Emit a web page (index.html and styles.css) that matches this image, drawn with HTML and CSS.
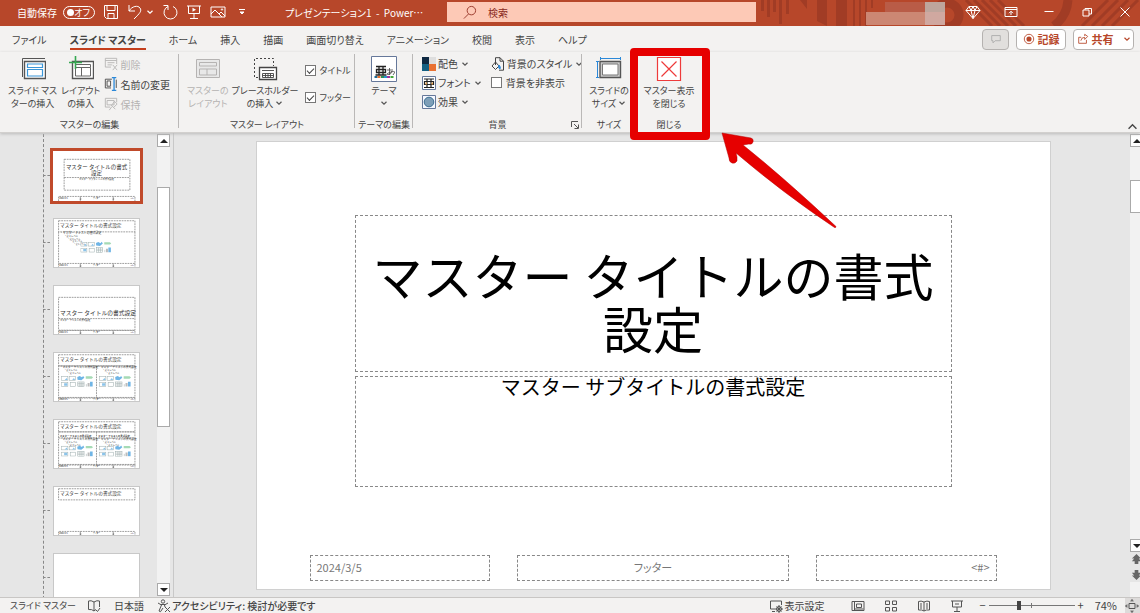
FILE: index.html
```html
<!DOCTYPE html>
<html lang="ja">
<head>
<meta charset="utf-8">
<title>プレゼンテーション1 - PowerPoint</title>
<link rel="stylesheet" href="styles.css">
</head>
<body>
<svg class="defs" aria-hidden="true">
  <symbol id="chev" viewBox="0 0 8 8"><path d="M1.5 2.8 4 5.2 6.500 2.800" fill="none" stroke="currentColor" stroke-width="1.200"/></symbol>
  <symbol id="foot" viewBox="0 0 860 60"><path d="M55 58V12H810V58M270 12V58M595 12V58" class="dash"/><text x="62" y="34" font-size="20">2024/3/5</text><text x="430" y="34" font-size="20" text-anchor="middle">フッター</text><text x="800" y="34" font-size="20" text-anchor="end">&lt;#&gt;</text><path d="M265 38h14M590 38h14" stroke="#777" stroke-width="14"/></symbol>
  <symbol id="media" viewBox="0 0 320 120">
    <g fill="none" stroke="#9aa" stroke-width="5"><rect x="5" y="15" width="62" height="36"/><rect x="80" y="15" width="62" height="36"/><rect x="5" y="74" width="62" height="38"/><rect x="90" y="74" width="52" height="38"/><rect x="165" y="68" width="62" height="46"/><path d="M165 83h62M165 98h62M186 68v46M206 68v46M250 90v24"/></g>
    <path d="M36 48l18-20 12 20zM110 48l16-20 14 20zM30 80h32v25H30z" fill="#8cc4ea"/>
    <path d="M160 20l24-10 22 12 12-14 12 18-30 24-38-4z" fill="#6fb5e6"/>
    <path d="M244 12h58l14 12-14 12h-58z" fill="#a5dab5"/><path d="M262 78h20v36h-20z" fill="#bbb"/><path d="M286 66h26v48h-26z" fill="#6fb5e6"/>
  </symbol>
</svg>

<header class="titlebar">
  <svg class="pattern" viewBox="0 0 388 26" aria-hidden="true">
    <g fill="#a13c25"><path d="M9 0h3v11H9zM15 0h3v17h-3zM21 0h3v12h-3zM27 0h3v24h-3zM34 0h3v14h-3zM48 0h7v9zM65 0h10v26l-10-5zM84 0h11v26H84zM101 0h2v26h-2zM107 0h2v26h-2zM113 0h2v26h-2zM119 0h2v8h-2z"/></g>
    <circle cx="195" cy="15" r="12" fill="none" stroke="#a13c25" stroke-width="9"/>
    <g fill="none" stroke="#a13c25"><path d="M214 0l26 26M222 0l26 26M230 0l26 26M238 0l26 26M246 0l26 26" stroke-width="3"/><path d="M316 0q-1 16-14 26" stroke-width="9"/><path d="M330 26 356 0M340 26 366 0M350 26 376 0M360 26 386 0" stroke-width="3"/></g>
    <path d="M114 12h59v13h-59z" fill="#cc8773"/><path d="M133 2h40v10h-40z" fill="#b95c47"/><path d="M173 2h20v10h-20z" fill="#bea59c"/><path d="M173 12h20v13h-20z" fill="#d0a8a0"/>
  </svg>
  <div class="quick">
    <label class="autosave" for="auto">自動保存</label>
    <button class="switch" id="auto" type="button" role="switch" aria-checked="false"><i></i>オフ</button>
    <button class="ico save" type="button" aria-label="保存"><svg viewBox="0 0 16 16"><path d="M1.500 1.500h13v13h-11l-2-2zM4 1.500v5h8v-5M5 14.500v-5h6v5"/></svg></button>
    <button class="ico" type="button" aria-label="元に戻す"><svg viewBox="0 0 16 16"><path d="M2 1v6h6M2 7C5 2 11 1 13 4s0 5-6 11"/></svg></button>
    <button class="ico tiny" type="button" aria-label="元に戻す履歴"><svg viewBox="0 0 8 8"><use href="#chev"/></svg></button>
    <button class="ico" type="button" aria-label="繰り返し"><svg viewBox="0 0 16 16"><path d="M1.500 1.500H6V6M6 2.500A6.500 6.500 0 1 0 11 2.500"/></svg></button>
    <button class="ico" type="button" aria-label="スライドショー"><svg viewBox="0 0 16 16"><path d="M1 2h14M2.500 2v7.500h11V2M8 9.500V14M4 14.500h8"/><path d="M6.500 3.800v4L10 5.800z" fill="#fff" stroke="none"/></svg></button>
    <button class="ico" type="button" aria-label="画像"><svg viewBox="0 0 16 16"><path d="M1 3h14v10H1zM1 10l4-4 7 7M9 10l2-2 4 4"/><circle cx="12" cy="5.500" r=".7"/></svg></button>
    <button class="ico tiny" type="button" aria-label="ツールバーのカスタマイズ"><svg viewBox="0 0 8 8"><path d="M1 1.500h6M2 4l2 2 2-2z" fill="#fff"/></svg></button>
  </div>
  <div class="doc">プレゼンテーション1&nbsp; -&nbsp; Power…</div>
  <div class="search">
    <svg viewBox="0 0 16 16" aria-hidden="true"><circle cx="10" cy="6" r="4.500"/><path d="M7 9.500 2 14.500"/></svg>
    <input type="text" aria-label="検索" placeholder="検索">
  </div>
  <div class="window">
    <button class="ico" type="button" aria-label="プレミアム"><svg viewBox="0 0 16 16"><path d="M4 2.500h8l3 4-7 8-7-8zM1 6.500h14M4 2.500l2 4 2 8 2-8 2-4M6 6.500l2-4 2 4"/></svg></button>
    <button class="ico" type="button" aria-label="リボンの表示オプション"><svg viewBox="0 0 16 16"><path d="M2 3.500h12v9H2zM2 5.500h12M8 11V7.500M6 9.200l2-2 2 2"/></svg></button>
    <button class="ico" type="button" aria-label="最小化"><svg viewBox="0 0 16 16"><path d="M3.500 7.500h9"/></svg></button>
    <button class="ico" type="button" aria-label="元に戻す (縮小)"><svg viewBox="0 0 16 16"><path d="M4 6h6v6H4zM6 6V4.500h6.500V10H10"/></svg></button>
    <button class="ico" type="button" aria-label="閉じる"><svg viewBox="0 0 16 16"><path d="M3.500 3.500l9 9M12.500 3.500l-9 9"/></svg></button>
  </div>
</header>

<nav class="tabs">
  <a href="#file">ファイル</a><a href="#master" class="on">スライド マスター</a><a href="#home">ホーム</a><a href="#insert">挿入</a><a href="#draw">描画</a><a href="#trans">画面切り替え</a><a href="#anim">アニメーション</a><a href="#review">校閲</a><a href="#view">表示</a><a href="#help">ヘルプ</a>
  <div class="actions">
    <button class="pill off" type="button" aria-label="コメント"><svg viewBox="0 0 14 14"><path d="M2 3h10v6H6l-2.500 2.500V9H2z"/></svg></button>
    <button class="pill rec" type="button"><svg viewBox="0 0 14 14"><circle cx="7" cy="7" r="5.500"/><circle cx="7" cy="7" r="3" fill="#b7472a" stroke="none"/></svg>記録</button>
    <button class="pill share" type="button"><svg viewBox="0 0 14 14"><path d="M5 5H2v7h9V8M4.500 9Q5 5 9 5V7.500L12.500 4 9 1.500V3.500"/></svg>共有<svg class="c" viewBox="0 0 8 8"><use href="#chev"/></svg></button>
  </div>
</nav>

<section class="ribbon" aria-label="リボン">
  <div class="group g1">
    <div class="row">
      <button class="big" type="button"><svg viewBox="0 0 26 26" fill="none"><path d="M2.500 21V2.500H25" stroke="#555"/><path d="M4.500 5.500h21v17h-21z" fill="#fff" stroke="#555" stroke-width="1.400"/><path d="M7.500 8h15v3.500h-15zM7.500 13.500h15V20h-15z" stroke="#3a96d8" stroke-width="1.200"/></svg>スライド マス<br>ターの挿入</button>
      <button class="big" type="button"><svg viewBox="0 0 26 26" fill="none"><path d="M4.500 5.500h21v17h-21z" fill="#fff" stroke="#555" stroke-width="1.400"/><path d="M7.500 8.500h15v3h-15zM7.500 11.500v8.500h15v-8.500M13.500 11.500V20" stroke="#666"/><path d="M7.500 0v13M1 6.500h13" stroke="#36a852" stroke-width="1.600"/></svg>レイアウト<br>の挿入</button>
      <div class="stack">
        <button type="button" class="dis"><svg viewBox="0 0 16 16"><path d="M8 11.500H1.500v-10h13V8M1.500 4h13M4 6.500h8M4 9h5M10 9l5 6M15 9l-5 6"/></svg>削除</button>
        <button type="button"><svg viewBox="0 0 16 16"><path d="M8 12.500H1.500v-10H9M14 3v9.500M3.500 4.500h4v6h-4z"/><path d="M9 .8h5M11.500 1v14M9 15.200h5" stroke="#2b88d8" stroke-width="1.500"/></svg>名前の変更</button>
        <button type="button" class="dis"><svg viewBox="0 0 16 16"><path d="M7 11.500H1.500v-10h13V6M3.500 4h8v5h-8zM6 15l3-4M8 9l5 5M9 9l3-4 3 3-4 4"/></svg>保持</button>
      </div>
    </div>
    <div class="name">マスターの編集</div>
  </div>
  <div class="group g2">
    <div class="row">
      <button class="big dis" type="button"><svg viewBox="0 0 26 26" fill="none" stroke="currentColor"><path d="M1.500 3.500h23v18h-23z" fill="#e8e8e8"/><path d="M4.500 6.500h17v3.500h-17zM4.500 13h17v6h-17zM12 13v6"/></svg>マスターの<br>レイアウト</button>
      <button class="big" type="button"><svg viewBox="0 0 26 26" fill="none" stroke="#444"><path d="M6 21.500H2.500v-19h19V10" stroke-dasharray="2 2"/><path d="M7.500 11.500h17v12h-17z" fill="#fff" stroke-width="1.300"/><path d="M10 14.500h12M10.500 17.500h11v4h-11zM10.500 19.500h11M13.500 17.500v4M16 17.500v4M18.500 17.500v4" stroke-width=".9"/></svg>プレースホルダー<br>の挿入 <svg class="c" viewBox="0 0 8 8"><use href="#chev"/></svg></button>
      <div class="checks">
        <label><input type="checkbox" checked>タイトル</label>
        <label><input type="checkbox" checked>フッター</label>
      </div>
    </div>
    <div class="name">マスター レイアウト</div>
  </div>
  <div class="group g3">
    <div class="row">
      <button class="big" type="button"><svg viewBox="0 0 26 26"><path d="M.5.500h25v25H.5z" fill="#fff" stroke="#66789a"/><path d="M5 10.500h10M8 10.500v8M12 10.500v8M5.500 13.500h9v3h-9zM4.500 19h11" fill="none" stroke="#222" stroke-width="1.300"/><path d="M16 14h6M18.500 12v7M21 15q-1 4-4 3.500t3-2.500 2 3" fill="none" stroke="#444" stroke-width=".8"/><path d="M3.500 20h3v2h-3z" fill="#1b6a98"/><path d="M6.500 20h3v2h-3z" fill="#e8702e"/><path d="M10 20h3v2h-3z" fill="#29905a"/><path d="M13 20h3v2h-3z" fill="#2694d0"/><path d="M16 20h3v2h-3z" fill="#a0309a"/><path d="M19.500 20h3v2h-3z" fill="#45a83c"/></svg>テーマ<br><svg class="c" viewBox="0 0 8 8"><use href="#chev"/></svg></button>
    </div>
    <div class="name">テーマの編集</div>
  </div>
  <div class="group g4">
    <div class="row">
      <div class="stack">
        <button type="button"><svg viewBox="0 0 14 14"><path d="M0 0h7v7H0z" fill="#0e2841" stroke="none"/><path d="M7 0h7v7H7z" fill="#dedede" stroke="none"/><path d="M0 7h7v7H0z" fill="#156082" stroke="none"/><path d="M7 7h7v7H7z" fill="#e97132" stroke="none"/></svg>配色<svg class="c" viewBox="0 0 8 8"><use href="#chev"/></svg></button>
        <button type="button"><svg viewBox="0 0 14 14"><path d="M.5.500h13v13H.5z" fill="#fff" stroke="#66789a"/><path d="M2 3h10M5 3v8M9 3v8M2.500 5.500h9v3h-9zM2 11.500h10" stroke="#222" stroke-width="1.200"/><path d="M3.500 6.500h1.500v2H3.500zM9.500 6.500H11v2H9.500z" fill="#e8a04a" stroke="none"/></svg>フォント<svg class="c" viewBox="0 0 8 8"><use href="#chev"/></svg></button>
        <button type="button"><svg viewBox="0 0 14 14"><path d="M.5.500h13v13H.5z" fill="#f5f8ff" stroke="#66789a"/><circle cx="7" cy="7" r="4.800" fill="#7e9fb8" stroke="#3d6f92"/></svg>効果<svg class="c" viewBox="0 0 8 8"><use href="#chev"/></svg></button>
      </div>
      <div class="stack">
        <button type="button"><svg viewBox="0 0 14 14"><path d="M4.500 3V.7H9l3.500 3.500v9H8M9 .7v3.500h3.500"/><path d="M4.500 5 1 9l3.500 3.500L8 9zM4.500 3v5"/><path d="M8 8q2 2 1 4-2 0-1-4" stroke="#2b88d8" fill="#2b88d8"/></svg>背景のスタイル<svg class="c" viewBox="0 0 8 8"><use href="#chev"/></svg></button>
        <label><input type="checkbox">背景を非表示</label>
      </div>
    </div>
    <div class="name">背景</div>
    <button class="launch" type="button" aria-label="背景の書式設定"><svg viewBox="0 0 8 8"><path d="M.5 6V.500H7M3 3l4 4M7.500 3.500v4h-4" fill="none" stroke="#555"/></svg></button>
  </div>
  <div class="group g5">
    <div class="row">
      <button class="big" type="button"><svg viewBox="0 0 26 26" fill="none"><path d="M4 2.500h21M4.500 1v3M24.500 1v3M1.500 5v17M0 5.500h3M0 21.500h3" stroke="#2b88d8"/><path d="M4 5.500h20.500v16H4z" fill="#ccc" stroke="#555" stroke-width="1.400"/><path d="M6.500 8h15.500v11H6.500z" fill="#fff" stroke="#777"/></svg>スライドの<br>サイズ <svg class="c" viewBox="0 0 8 8"><use href="#chev"/></svg></button>
    </div>
    <div class="name">サイズ</div>
  </div>
  <div class="group g6">
    <div class="row">
      <button class="big" type="button"><svg viewBox="0 0 26 26" fill="none" stroke="#ee3b3b"><path d="M1.500 1.500h23v23h-23z" fill="#fff" stroke-width="1.200"/><path d="M5.500 5.500l15 15M20.500 5.500l-15 15" stroke-width="1.200"/></svg>マスター表示<br>を閉じる</button>
    </div>
    <div class="name">閉じる</div>
    <div class="frame"></div>
    <svg class="arrow" viewBox="0 0 120 100" aria-hidden="true"><path d="M1 2 30 7q4 1 3 4-1 3-4 2l-8 1Q50 35 116 96q1 2-1 1Q60 58 16 24l1 5v5q-2 3-5 2-3-1-3-5z" fill="none"/><path d="M1 2 30 7q3 1 2 4-1 3-4 2l-6 1Q62 46 115 95.500q0 1.500-1.500 1Q62 62 15 22l1 4v4q-2 3-5 2-3-1-3-5z" fill="#e60000" stroke="#b40000" stroke-width=".5"/></svg>
  </div>
  <button class="collapse" type="button" aria-label="リボンを折りたたむ"><svg viewBox="0 0 8 8"><path d="M.5 6 4 2.500 7.500 6" fill="none" stroke="#444" stroke-width="1.200"/></svg></button>
</section>

<main>
  <aside class="panel">
    <ul class="thumbs">
      <li class="sel"><a href="#l1" aria-label="タイトル スライド"><svg viewBox="0 0 860 490"><path d="M110 80h650v305H110zM110 260h650" class="dash"/><text x="430" y="172" font-size="54" text-anchor="middle">マスター タイトルの書式</text><text x="430" y="234" font-size="54" text-anchor="middle">設定</text><text x="430" y="280" font-size="23" text-anchor="middle">マスター サブタイトルの書式設定</text><use href="#foot" y="435" width="860" height="60"/></svg></a></li>
      <li><a href="#l2" aria-label="タイトルとコンテンツ"><svg viewBox="0 0 860 490"><path d="M55 25h755v110H55zM55 135v320M810 135v320" class="dash"/><text x="70" y="86" font-size="46">マスター タイトルの書式設定</text><text x="68" y="160" font-size="29">・マスター テキストの書式設定</text><text x="110" y="186" font-size="23">・第 2 レベル</text><text x="145" y="212" font-size="21">・第 3 レベル</text><text x="175" y="238" font-size="19">・第 4 レベル</text><text x="205" y="262" font-size="19">・第 5 レベル</text><use href="#media" x="270" y="225" width="310" height="118"/><use href="#foot" y="435" width="860" height="60"/></svg></a></li>
      <li><a href="#l3" aria-label="セクション見出し"><svg viewBox="0 0 860 490"><path d="M55 120h755v325H55zM55 330h755" class="dash"/><text x="70" y="298" font-size="57">マスター タイトルの書式設定</text><text x="68" y="353" font-size="23">マスター テキストの書式設定</text><use href="#foot" y="435" width="860" height="60"/></svg></a></li>
      <li><a href="#l4" aria-label="2 つのコンテンツ"><svg viewBox="0 0 860 490"><path d="M55 25h755v110H55zM55 135h755v318H55zM430 135v318" class="dash"/><text x="70" y="86" font-size="46">マスター タイトルの書式設定</text><text x="66" y="160" font-size="27">・マスター テキストの書式設定</text><text x="446" y="160" font-size="27">・マスター テキストの書式設定</text><g font-size="22"><text x="110" y="190">・第 2 レベル</text><text x="145" y="216">・第 3 レベル</text><text x="490" y="190">・第 2 レベル</text><text x="525" y="216">・第 3 レベル</text></g><use href="#media" x="80" y="226" width="320" height="120"/><use href="#media" x="455" y="226" width="320" height="120"/><use href="#foot" y="435" width="860" height="60"/></svg></a></li>
      <li><a href="#l5" aria-label="比較"><svg viewBox="0 0 860 490"><path d="M55 25h755v100H55zM55 125h755v328H55zM55 185h755M430 125v328" class="dash"/><text x="70" y="86" font-size="46">マスター タイトルの書式設定</text><g font-size="24" font-weight="700"><text x="66" y="172">マスター テキストの書式設定</text><text x="446" y="172">マスター テキストの書式設定</text></g><g font-size="27"><text x="66" y="208">・マスター テキストの書式設定</text><text x="446" y="208">・マスター テキストの書式設定</text></g><g font-size="22"><text x="110" y="236">・第 2 レベル</text><text x="145" y="260">・第 3 レベル</text><text x="490" y="236">・第 2 レベル</text><text x="525" y="260">・第 3 レベル</text></g><use href="#media" x="80" y="252" width="320" height="120"/><use href="#media" x="455" y="252" width="320" height="120"/><use href="#foot" y="435" width="860" height="60"/></svg></a></li>
      <li><a href="#l6" aria-label="タイトルのみ"><svg viewBox="0 0 860 490"><path d="M55 25h755v110H55z" class="dash"/><text x="70" y="86" font-size="46">マスター タイトルの書式設定</text><use href="#foot" y="435" width="860" height="60"/></svg></a></li>
      <li><a href="#l7" aria-label="白紙"><svg viewBox="0 0 860 490"></svg></a></li>
    </ul>
    <div class="scroll left"><button type="button" aria-label="上へ"><i class="up"></i></button><span class="track"><b></b></span><button type="button" aria-label="下へ"><i class="down"></i></button></div>
  </aside>
  <section class="stage">
    <article class="slide">
      <h1>マスター タイトルの書式<br>設定</h1>
      <h2>マスター サブタイトルの書式設定</h2>
      <footer><span>2024/3/5</span><span>フッター</span><span>&lt;#&gt;</span></footer>
    </article>
  </section>
  <div class="scroll right"><button type="button" aria-label="上へ"><i class="up"></i></button><span class="track"><b></b></span><button type="button" aria-label="下へ"><i class="down"></i></button>
    <button class="page" type="button" aria-label="前のスライド"><svg viewBox="0 0 12 12"><path d="M6 0l5 5H8.500L11 8H8v3H4V8H1l2.500-3H1z"/></svg></button>
    <button class="page" type="button" aria-label="次のスライド"><svg viewBox="0 0 12 12"><path d="M6 12 1 7h2.500L1 4h3V1h4v3h3L8.500 7H11z"/></svg></button>
  </div>
</main>

<div class="status">
  <span class="s1">スライド マスター</span>
  <button type="button" class="s2" aria-label="スペルチェック"><svg viewBox="0 0 14 14"><path d="M7 3v9M7 3Q4 1 1.500 2v8.500Q5 10 7 12q1-1 2-1.500M7 3q3-2 5.500-1v6M9 11l1.500 1.500L13 9"/></svg></button>
  <button type="button" class="s3">日本語</button>
  <button type="button" class="s4"><svg viewBox="0 0 14 14"><circle cx="6" cy="2.500" r="1.700"/><path d="M1 4l3.500 2L2 12l1.500.7L6 9M11 4 7.500 6l.5 2M4 5.500h4M8 8l5 5M13 8l-5 5"/></svg>アクセシビリティ: 検討が必要です</button>
  <div class="tools">
    <button type="button" class="disp"><svg viewBox="0 0 14 14"><path d="M6 10H1.500V2h11v4M3 12.500h3"/><circle cx="10" cy="10" r="2.500"/><path d="M10 6v8M6 10h8M7.500 7.500l5 5M12.500 7.500l-5 5"/></svg>表示設定</button>
    <button type="button" aria-label="標準"><svg viewBox="0 0 14 14"><path d="M1 2.500h12v9H1zM3.500 2.500v9M5.500 5h5v3.500h-5zM3.500 10h9"/></svg></button>
    <button type="button" aria-label="スライド一覧"><svg viewBox="0 0 14 14"><path d="M1.500 2h4v3.500h-4zM8.500 2h4v3.500h-4zM1.500 8.500h4V12h-4zM8.500 8.500h4V12h-4z"/></svg></button>
    <button type="button" aria-label="閲覧表示"><svg viewBox="0 0 14 14"><path d="M7 3v9M7 3Q4 1.500 1.500 2.500v8.500Q5 10.500 7 12q2-1.500 5.500-1V2.500Q10 1.500 7 3M3 5h2M3 7h2M3 9h2M9 5h2M9 7h2M9 9h2"/></svg></button>
    <button type="button" aria-label="スライドショー"><svg viewBox="0 0 14 14"><path d="M1 2h12M2.500 2v6h9V2M5 5h4M7 8v4M4 12.500h6"/></svg></button>
    <div class="zoom"><button type="button" aria-label="縮小">−</button><input type="range" min="0" max="100" value="35" aria-label="ズーム"><button type="button" aria-label="拡大">+</button><span>74%</span></div>
    <button type="button" class="fit" aria-label="ウィンドウに合わせる"><svg viewBox="0 0 14 14"><path d="M4 4.500h6v5H4zM7 .7v2M5.500 2 7 .7 8.500 2M7 13.300v-2M5.500 12 7 13.300 8.500 12M.7 7h2M2 5.500.7 7 2 8.500M13.300 7h-2M12 5.500 13.300 7 12 8.500"/></svg></button>
  </div>
</div>
</body>
</html>
```

FILE: styles.css
```css
* { box-sizing: border-box; }
body {
  margin: 0;
  height: 100vh;
  overflow: hidden;
  display: flex;
  flex-direction: column;
  background: #e6e6e6;
  color: #444;
  font: 10px/13px "Noto Sans CJK JP", "Noto Sans", sans-serif;
  font-feature-settings: "palt";
}
button, input { font: inherit; font-feature-settings: inherit; color: inherit; }
button { border: 0; padding: 0; background: none; }
a { color: inherit; text-decoration: none; }
.defs { position: absolute; width: 0; height: 0; }

/* title bar */
.titlebar {
  position: relative;
  flex: none;
  height: 26px;
  display: flex;
  align-items: center;
  background: #b7472a;
  color: #fff;
  padding-bottom: 2px;
}
.pattern { position: absolute; right: 0; top: 0; width: 388px; height: 26px; }
.quick { display: flex; align-items: center; width: 285px; padding-left: 17px; gap: 8px; }
.autosave { white-space: nowrap; }
.switch {
  width: 32px;
  height: 13px;
  flex: none;
  margin-left: -2px;
  border: 1px solid #fff;
  border-radius: 7px;
  display: flex;
  align-items: center;
  justify-content: space-between;
  padding: 0 4px 0 3px;
  font-size: 9px;
  line-height: 11px;
  white-space: nowrap;
}
.switch i { width: 7px; height: 7px; flex: none; border-radius: 50%; background: #fff; }
.ico svg { display: block; width: 16px; height: 16px; fill: none; stroke: #fff; }
.ico.tiny svg { width: 8px; height: 8px; }
.ico.tiny { margin: 0 0 0 -5px; color: #fff; }
.ico.tiny:last-child { margin: 0 0 0 4px; }
.doc { width: 162px; white-space: nowrap; }
.search {
  flex: 0 1 309px;
  height: 20px;
  display: flex;
  align-items: center;
  gap: 11px;
  padding-left: 15px;
  background: #fdc9b6;
}
.search svg { width: 15px; height: 15px; fill: none; stroke: #97372a; flex: none; }
.search input { flex: 1; min-width: 0; border: 0; padding: 0; background: none; }
.search input::placeholder { color: #8a2a1c; opacity: 1; }
.window { position: relative; margin-left: auto; display: flex; gap: 22px; padding-right: 7px; }

/* tabs */
.tabs { flex: none; height: 26px; display: flex; align-items: center; gap: 23px; padding: 0 6px 0 12px; background: #f3f2f1; white-space: nowrap; }
.tabs a { height: 22px; line-height: 24px; border-bottom: 2px solid transparent; }
.tabs .on { font-weight: 700; border-color: #c43e1c; }
.actions { margin-left: auto; display: flex; gap: 7px; }
.pill {
  height: 21px;
  display: flex;
  align-items: center;
  justify-content: center;
  gap: 3px;
  border: 1px solid #b5b2b0;
  border-radius: 4px;
  background: #fff;
  color: #b7472a;
  font-weight: 700;
  font-size: 11px;
}
.pill svg { width: 12px; height: 12px; fill: none; stroke: currentColor; }
.pill .c { width: 8px; height: 8px; margin-left: 6px; color: #b7472a; stroke: none; }
.off { width: 27px; background: #e1dfdd; color: #aaa; }
.rec { width: 50px; }
.share { width: 61px; }

/* ribbon */
.ribbon { position: relative; flex: none; height: 81px; display: flex; background: #f3f2f1; z-index: 2; border-bottom: 1px solid #d2d0ce; box-shadow: 0 1px 3px #bbb; }
.group { position: relative; display: flex; flex-direction: column; justify-content: space-between; padding-top: 4px; }
.group::after { content: ""; position: absolute; right: 0; top: 2px; bottom: 4px; width: 1px; background: #bab8b7; }
.g5::after, .g6::after { display: none; }
.row { display: flex; }
.name { text-align: center; height: 14px; white-space: nowrap; font-size: 9px; }
.g1 { width: 179px; } .g2 { width: 176px; } .g3 { width: 58px; } .g4 { width: 169px; } .g5 { width: 54px; } .g6 { width: 66px; }
.big { font-size: 9px; line-height: 13px; white-space: nowrap; text-align: center; flex: none; align-self: flex-start; }
.big > svg:first-child { display: block; width: 26px; height: 26px; margin: 0 auto 2px; }
.c { width: 8px; height: 8px; color: #555; }
.dis { color: #b5b3b2; }
.stack { display: flex; flex-direction: column; margin-top: -2px; }
.stack button, .stack label { height: 19px; display: flex; align-items: center; gap: 2px; white-space: nowrap; }
.stack svg { width: 14px; height: 14px; fill: none; stroke: currentColor; }
.stack svg.c { width: 8px; height: 8px; margin-left: 1px; }
.g1 .row { padding-left: 8px; gap: 4px; }
.g1 .stack button { height: 20px; }
.g2 .row { padding-left: 8px; gap: 3px; }
.g3 .row, .g5 .row, .g6 .row { justify-content: center; }
.g4 .row { padding-left: 9px; gap: 9px; }
.g4 .stack label { gap: 4px; }
.checks { display: flex; flex-direction: column; gap: 14px; padding: 8px 0 0 3px; }
.checks label { display: flex; align-items: center; gap: 4px; font-size: 9px; white-space: nowrap; }
input[type=checkbox] { appearance: none; margin: 0; width: 11px; height: 11px; border: 1px solid #777; background: #fff; display: grid; place-items: center; }
input[type=checkbox]:checked::before { content: ""; width: 6px; height: 3px; border: solid #444; border-width: 0 0 1px 1px; rotate: -45deg; margin-top: -2px; }
.launch { position: absolute; right: 3px; bottom: 3px; width: 8px; height: 8px; display: flex; }
.collapse { position: absolute; right: 3px; bottom: 1px; width: 9px; height: 9px; display: flex; }
.frame { position: absolute; left: -6px; top: -4px; width: 80px; height: 92px; border: 8px solid #e60000; border-radius: 4px; }
.arrow { position: absolute; left: 85px; top: 79px; width: 120px; height: 100px; }

/* workspace */
main { flex: 1; min-height: 0; display: flex; }
.panel { position: relative; width: 174px; display: flex; justify-content: flex-end; border-right: 1px solid #c8c8c8; padding: 1px 3px 1px 0; overflow: hidden; }
.thumbs { list-style: none; margin: 0; padding: 17px 0 0; flex: 1; height: 480px; position: relative; display: flex; flex-direction: column; gap: 17px; padding-left: 53px; }
.thumbs::before { content: ""; position: absolute; left: 43px; top: 0; bottom: 0; border-left: 1px dashed #888; }
.thumbs li { position: relative; width: 87px; height: 50px; flex: none; background: #fff; outline: 1px solid #c8c8c8; outline-offset: -1px; }
.thumbs li::before { content: ""; position: absolute; left: -10px; top: 24px; width: 7px; border-top: 1px dashed #888; }
.thumbs .sel { outline: 3px solid #c04a2b; outline-offset: 0; }
.thumbs svg { display: block; width: 87px; height: 50px; }
.thumbs text { fill: #333; font-feature-settings: normal; }
.dash { fill: none; stroke: #888; stroke-width: 8; stroke-dasharray: 18 8; }
.scroll { width: 13px; display: flex; flex-direction: column; background: #f2f2f2; flex: none; }
.scroll button { height: 13px; flex: none; border: 1px solid #aaa; background: #fff; display: grid; place-items: center; }
.scroll i { border: 4px solid transparent; }
.scroll .up { border-bottom-color: #222; border-top: 0; }
.scroll .down { border-top-color: #222; border-bottom: 0; }
.track { flex: 1; display: flex; flex-direction: column; }
.track b { border: 1px solid #aaa; background: #fff; }
.left .track { padding-top: 40px; }
.left b { height: 240px; }
.right { margin-right: -3px; padding: 1px 0 15px; }
.right .track { padding-top: 33px; }
.right b { height: 33px; }
.scroll .page { border: 0; background: #e6e6e6; height: 15px; }
.page svg { width: 11px; height: 11px; fill: #666; }
.stage { flex: 1; min-width: 0; display: flex; justify-content: center; padding: 8px 0 7px 2px; }
.slide {
  height: 100%;
  aspect-ratio: 795 / 449;
  display: flex;
  flex-direction: column;
  align-items: center;
  background: #fff;
  border: 1px solid #d0d0d0;
  padding: 73px 53px 8px;
  color: #000;
}
.slide h1, .slide h2, .slide span { border: 1px dashed #888; font-weight: 400; margin: 0; }
.slide h1, .slide h2 { width: 597px; max-width: 100%; text-align: center; font-feature-settings: normal; }
.slide h1 { height: 157px; padding-top: 32px; font-size: 50px; line-height: 53px; }
.slide h2 { height: 111px; margin-top: 4px; font-size: 20px; line-height: 20px; }
.slide footer { margin-top: auto; width: 100%; display: grid; grid-template-columns: 2fr 3fr 2fr; gap: 27px; color: #777; font-size: 11px; }
.slide span { height: 26px; line-height: 22px; padding: 0 6px; }
.slide span:nth-child(2) { text-align: center; }
.slide span:nth-child(3) { text-align: right; }

/* status bar */
.status { flex: none; height: 16px; display: flex; align-items: center; background: #f3f2f1; border-top: 1px solid #c8c6c4; padding-left: 10px; white-space: nowrap; }
.status button { display: flex; align-items: center; gap: 1px; }
.status svg { width: 14px; height: 14px; fill: none; stroke: #555; flex: none; }
.s1 { width: 77px; font-size: 9px; }
.s2 { width: 27px; }
.s3 { width: 43px; }
.s4 { font-weight: 500; }
.tools { margin-left: auto; display: flex; align-items: center; gap: 19px; }
.disp { margin-right: 8px; }
.zoom { display: flex; align-items: center; gap: 3px; font-size: 11px; margin-left: -4px; }
.zoom span { margin-left: 8px; }
.zoom input { appearance: none; width: 86px; height: 12px; margin: 0; background: linear-gradient(#777, #777) center / 100% 1px no-repeat, linear-gradient(#777, #777) center / 1px 5px no-repeat; }
.zoom input::-webkit-slider-thumb { appearance: none; width: 4px; height: 9px; background: #444; }
.fit { width: 15px; height: 15px; background: #dddbda; margin-left: -11px; }
```
